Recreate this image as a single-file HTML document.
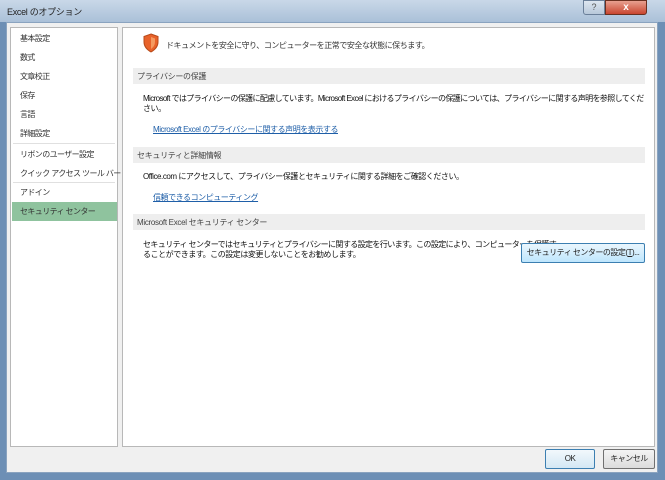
<!DOCTYPE html>
<html><head><meta charset="utf-8"><style>
*{margin:0;padding:0;box-sizing:border-box}
body{width:665px;height:480px;overflow:hidden;font-family:"Liberation Sans","Noto Sans CJK JP",sans-serif;font-size:8px;color:#222;background:#6d8fb5;position:relative}
.title{position:absolute;left:0;top:0;width:665px;height:22px;background:linear-gradient(#c9d8e8,#aac0d8);}
.title span{position:absolute;left:7px;top:5px;font-size:9px;color:#222;letter-spacing:-0.3px}
.body{position:absolute;left:6px;top:22px;width:652px;height:451px;background:#f0f0f0;border:1px solid #8aa3bf}
.left{position:absolute;left:10px;top:27px;width:108px;height:420px;background:#fff;border:1px solid #b8b8b8}
.right{position:absolute;left:122px;top:27px;width:533px;height:420px;background:#fff;border:1px solid #b8b8b8}
.it{position:absolute;left:9px;font-size:8px;color:#333;white-space:nowrap;letter-spacing:-0.6px}
.sep{position:absolute;left:2px;width:102px;height:1px;background:#e0e0e0}
.sel{position:absolute;left:1px;top:174px;width:105px;height:19px;background:#8fc39e}
.hd{position:absolute;left:10px;width:512px;height:16px;background:#eeeeee;font-size:8px;color:#444;padding:3px 4px;white-space:nowrap;letter-spacing:-0.3px}
.t{position:absolute;font-size:8px;color:#111;white-space:nowrap;letter-spacing:-0.45px}
.lk{color:#1f5fa8;text-decoration:underline}
.btn{position:absolute;border:1px solid #707070;border-radius:2px;background:linear-gradient(#f4f4f4,#dcdcdc);font-size:8px;text-align:center;white-space:nowrap;letter-spacing:-0.5px}
</style></head><body>
<div class="title"><span>Excel のオプション</span>
<div style="position:absolute;left:583px;top:0;width:22px;height:15px;background:linear-gradient(#dde6f0,#b8c8da);border:1px solid #6a7f99;border-radius:0 0 0 3px;font-size:9px;color:#555;text-align:center;line-height:13px">?</div>
<div style="position:absolute;left:605px;top:0;width:42px;height:15px;background:linear-gradient(#e8a090,#c9452f);border:1px solid #6a3020;border-radius:0 0 3px 0;color:#fff;font-size:10px;font-weight:bold;text-align:center;line-height:13px">x</div>
</div>
<div class="body"></div>
<div class="left">
<div class="it" style="top:5px">基本設定</div>
<div class="it" style="top:24px">数式</div>
<div class="it" style="top:43px">文章校正</div>
<div class="it" style="top:62px">保存</div>
<div class="it" style="top:81px">言語</div>
<div class="it" style="top:100px">詳細設定</div>
<div class="sep" style="top:115px"></div>
<div class="it" style="top:121px">リボンのユーザー設定</div>
<div class="it" style="top:140px">クイック アクセス ツール バー</div>
<div class="sep" style="top:154px"></div>
<div class="it" style="top:159px">アドイン</div>
<div class="sel"></div>
<div class="it" style="top:178px">セキュリティ センター</div>
</div>
<div class="right">
<svg style="position:absolute;left:19px;top:5px" width="18" height="20" viewBox="0 0 18 20"><path d="M9 1 L16 3.5 L16 9 Q16 15 9 19 Q2 15 2 9 L2 3.5 Z" fill="#e8622a" stroke="#b84a1a"/><path d="M9 4 L13 5.5 L13 9 Q13 13 9 16 Z" fill="#f59a60"/></svg>
<div class="t" style="left:43px;top:12px;color:#333">ドキュメントを安全に守り、コンピューターを正常で安全な状態に保ちます。</div>
<div class="hd" style="top:40px">プライバシーの保護</div>
<div class="t" style="left:20px;top:65px;letter-spacing:-0.62px">Microsoft ではプライバシーの保護に配慮しています。Microsoft Excel におけるプライバシーの保護については、プライバシーに関する声明を参照してくだ</div>
<div class="t" style="left:20px;top:75px">さい。</div>
<div class="t lk" style="left:30px;top:96px">Microsoft Excel のプライバシーに関する声明を表示する</div>
<div class="hd" style="top:119px">セキュリティと詳細情報</div>
<div class="t" style="left:20px;top:143px">Office.com にアクセスして、プライバシー保護とセキュリティに関する詳細をご確認ください。</div>
<div class="t lk" style="left:30px;top:164px">信頼できるコンピューティング</div>
<div class="hd" style="top:186px">Microsoft Excel セキュリティ センター</div>
<div class="t" style="left:20px;top:211px;letter-spacing:-0.6px">セキュリティ センターではセキュリティとプライバシーに関する設定を行います。この設定により、コンピューターを保護す</div>
<div class="t" style="left:20px;top:221px">ることができます。この設定は変更しないことをお勧めします。</div>
<div class="btn" style="left:398px;top:215px;width:124px;height:20px;line-height:18px;border-color:#3c7fb1;background:linear-gradient(#eaf6fd,#bee6fd)">セキュリティ センターの設定(<u>T</u>)...</div>
</div>
<div class="btn" style="left:545px;top:449px;width:50px;height:20px;line-height:18px;border-color:#3c7fb1;background:linear-gradient(#f2f8fc,#d4e8f4)">OK</div>
<div class="btn" style="left:603px;top:449px;width:52px;height:20px;line-height:18px">キャンセル</div>
</body></html>
